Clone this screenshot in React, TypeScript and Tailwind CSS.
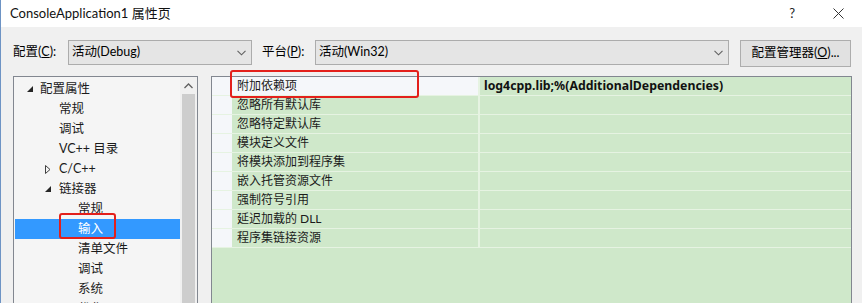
import React from "react";

const FONT = "font-['Lato','Noto_Sans_CJK_SC',sans-serif]";

function Chevron() {
  return (
    <svg width="9" height="6" viewBox="0 0 9 6" className="shrink-0">
      <path d="M0.5 0.8 L4.5 4.8 L8.5 0.8" fill="none" stroke="#606060" strokeWidth="1.1" />
    </svg>
  );
}

function Expanded() {
  return (
    <svg width="6" height="6" viewBox="0 0 6 6">
      <path d="M6 0 L6 6 L0 6 Z" fill="#262626" />
    </svg>
  );
}

function Collapsed() {
  return (
    <svg width="6" height="9" viewBox="0 0 6 9">
      <path d="M0.5 0.5 L5 4.5 L0.5 8.5 Z" fill="none" stroke="#404040" strokeWidth="1" />
    </svg>
  );
}

type TreeItem = { text: string; level: number; icon?: "open" | "closed"; selected?: boolean };

const treeItems: TreeItem[] = [
  { text: "配置属性", level: 0, icon: "open" },
  { text: "常规", level: 1 },
  { text: "调试", level: 1 },
  { text: "VC++ 目录", level: 1 },
  { text: "C/C++", level: 1, icon: "closed" },
  { text: "链接器", level: 1, icon: "open" },
  { text: "常规", level: 2 },
  { text: "输入", level: 2, selected: true },
  { text: "清单文件", level: 2 },
  { text: "调试", level: 2 },
  { text: "系统", level: 2 },
  { text: "优化", level: 2 },
];

const props = [
  "附加依赖项",
  "忽略所有默认库",
  "忽略特定默认库",
  "模块定义文件",
  "将模块添加到程序集",
  "嵌入托管资源文件",
  "强制符号引用",
  "延迟加载的 DLL",
  "程序集链接资源",
];

function TreeRow({ item }: { item: TreeItem }) {
  const textPad = item.level === 0 ? "pl-[25px]" : item.level === 1 ? "pl-[44px]" : "pl-[63px]";
  const iconLeft = item.level === 0 ? "left-[12px]" : "left-[30px]";
  return (
    <div
      className={
        "relative h-[20px] shrink-0 flex items-center text-[12.5px] leading-none " +
        textPad +
        (item.selected ? " bg-[#3399ff] text-white" : " text-[#1b1b1b]")
      }
    >
      {item.icon && (
        <span className={"absolute top-0 bottom-0 flex items-center " + iconLeft}>
          {item.icon === "open" ? <Expanded /> : <Collapsed />}
        </span>
      )}
      <span>{item.text}</span>
    </div>
  );
}

export default function App() {
  return (
    <div
      className={
        "relative w-[862px] h-[303px] overflow-hidden bg-[#f0f0f0] border-l border-[#6d93c4] text-black " +
        FONT
      }
    >
      {/* Title bar */}
      <div className="h-[27px] bg-white flex items-center pl-[9px] pr-[18px]">
        <span className="text-[13px] text-[#111]">ConsoleApplication1 属性页</span>
        <div className="ml-auto flex items-center">
          <span className="text-[13px] text-[#222] mr-[38px]">?</span>
          <svg width="11" height="11" viewBox="0 0 11 11">
            <path d="M0.5 0.5 L10.5 10.5 M10.5 0.5 L0.5 10.5" stroke="#333" strokeWidth="1" />
          </svg>
        </div>
      </div>

      {/* Toolbar */}
      <div className="mt-[13px] h-[27px] flex items-start pl-[12px] text-[12.5px]">
        <div className="w-[55px] h-[25px] flex items-center">
          <span>
            配置(<span className="underline">C</span>):
          </span>
        </div>
        <div className="w-[184px] h-[25px] bg-[#e5e5e5] border border-[#acacac] flex items-center pl-[3px] pr-[5px]">
          <span className="flex-1">活动(Debug)</span>
          <Chevron />
        </div>
        <div className="ml-[10px] w-[53px] h-[25px] flex items-center">
          <span>
            平台(<span className="underline">P</span>):
          </span>
        </div>
        <div className="w-[414px] h-[25px] bg-[#e5e5e5] border border-[#acacac] flex items-center pl-[3px] pr-[5px]">
          <span className="flex-1">活动(Win32)</span>
          <Chevron />
        </div>
        <div className="ml-[11px] w-[111px] h-[27px] bg-[#e1e1e1] border border-[#adadad] flex items-center justify-center">
          <span>
            配置管理器(<span className="underline">O</span>)...
          </span>
        </div>
      </div>

      {/* Panels */}
      <div className="mt-[9px] flex pl-[12px]">
        {/* Tree */}
        <div className="w-[185px] h-[240px] bg-[#f5f5f5] border border-[#828790] flex">
          <div className="flex-1 pl-[1px] pt-[2px] flex flex-col overflow-hidden">
            {treeItems.map((it, i) => (
              <TreeRow key={i} item={it} />
            ))}
          </div>
          <div className="w-[17px] flex flex-col bg-[#f0f0f0]">
            <div className="h-[17px] flex items-center justify-center">
              <svg width="9" height="6" viewBox="0 0 9 6">
                <path d="M0.5 5 L4.5 1 L8.5 5" fill="none" stroke="#606060" strokeWidth="1.3" />
              </svg>
            </div>
            <div className="mx-[2px] flex-1 bg-[#cdcdcd]" />
          </div>
        </div>

        {/* Property grid */}
        <div className="ml-[13px] w-[641px] h-[240px] bg-[#cfe8ca] border border-[#828790] flex flex-col">
          {props.map((p, i) => (
            <div key={i} className="h-[19px] flex border-b border-[#e6f3e2]">
              <div className="w-[20px] bg-[#f5f7fa]" />
              <div
                className={
                  "w-[246px] flex items-center pl-[5px] text-[12px] leading-none text-[#1b1b1b] " +
                  (i === 0 ? "bg-[#f5f7fa]" : "")
                }
              >
                {p}
              </div>
              <div className="flex-1 flex items-center pl-[4px] border-l-2 border-[#e6f3e2] text-[12.3px] leading-none font-bold text-[#111] font-['Noto_Sans',sans-serif]">
                {i === 0 ? "log4cpp.lib;%(AdditionalDependencies)" : ""}
              </div>
            </div>
          ))}
        </div>
      </div>

      {/* Red highlight boxes */}
      <div className="absolute left-[229px] top-[70px] w-[189px] h-[28px] border-2 border-[#e3201b] rounded-[3px]" />
      <div className="absolute left-[58px] top-[213px] w-[57px] h-[26px] border-2 border-[#e3201b] rounded-[3px]" />
    </div>
  );
}
